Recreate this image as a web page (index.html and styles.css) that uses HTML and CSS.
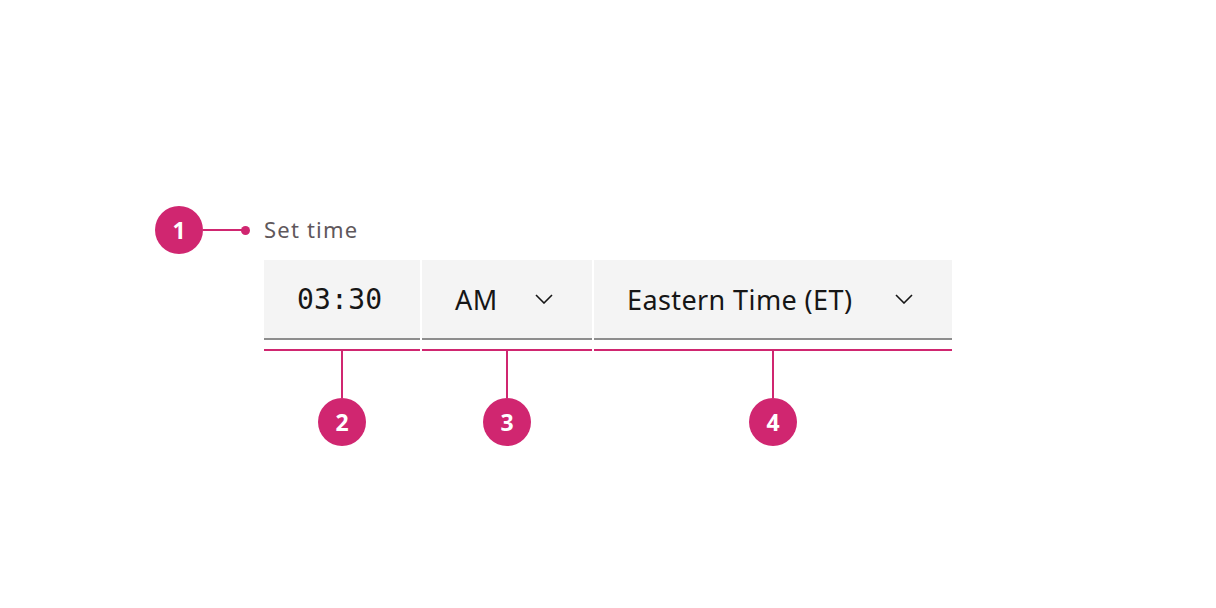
FILE: index.html
```html
<!DOCTYPE html>
<html lang="en">
<head>
<meta charset="utf-8">
<title>Time picker anatomy</title>
<link rel="stylesheet" href="styles.css">
</head>
<body>
<main class="stage">
  <div class="picker">
    <div class="label-row">
      <div class="callout-left">
        <span class="badge">1</span>
        <span class="leader"></span>
        <span class="dot"></span>
      </div>
      <span class="label">Set time</span>
    </div>
    <div class="fields">
      <div class="part part-time">
        <div class="field">
          <span class="mono">03:30</span>
        </div>
        <div class="bracket"></div>
        <div class="stem"></div>
        <span class="badge">2</span>
      </div>
      <div class="part part-ampm">
        <div class="field select">
          <span class="value">AM</span>
          <svg class="chevron" width="18" height="10" viewBox="0 0 18 10"><path d="M1 1 L9 9 L17 1" fill="none" stroke="#161616" stroke-width="1.6"/></svg>
        </div>
        <div class="bracket"></div>
        <div class="stem"></div>
        <span class="badge">3</span>
      </div>
      <div class="part part-zone">
        <div class="field select">
          <span class="value">Eastern Time (ET)</span>
          <svg class="chevron" width="18" height="10" viewBox="0 0 18 10"><path d="M1 1 L9 9 L17 1" fill="none" stroke="#161616" stroke-width="1.6"/></svg>
        </div>
        <div class="bracket"></div>
        <div class="stem"></div>
        <span class="badge">4</span>
      </div>
    </div>
  </div>
</main>
</body>
</html>
```

FILE: styles.css
```css
* { box-sizing: border-box; }
html, body { margin: 0; padding: 0; background: #ffffff; }
body { width: 1216px; height: 608px; overflow: hidden; font-family: "Noto Sans", "Open Sans", sans-serif; }

.stage { padding: 215px 0 0 264px; }

.picker { display: flex; flex-direction: column; width: 688px; }

.label-row { position: relative; height: 45px; display: flex; align-items: flex-start; }
.label {
  font-family: "Noto Sans", sans-serif;
  font-size: 22px;
  line-height: 28px;
  letter-spacing: 1.2px;
  color: #5f585c;
}

.callout-left {
  position: absolute;
  right: 100%;
  top: -9px;
  margin-right: 14px;
  display: flex;
  align-items: center;
}
.callout-left .leader { width: 42px; height: 2px; background: #d02670; }
.callout-left .dot { width: 9px; height: 9px; border-radius: 50%; background: #d02670; margin-left: -4px; }

.badge {
  width: 48px; height: 48px; border-radius: 50%;
  background: #d02670; color: #ffffff;
  display: flex; align-items: center; justify-content: center;
  font-family: "Noto Sans", sans-serif; font-weight: 700; font-size: 23px;
  flex: none;
}

.fields { display: flex; gap: 2px; }
.part { display: flex; flex-direction: column; align-items: center; }
.part-time { width: 156px; }
.part-ampm { width: 170px; }
.part-zone { width: 358px; }

.field {
  width: 100%; height: 80px;
  background: #f4f4f4;
  border-bottom: 2px solid #8d8d8d;
  display: flex; align-items: center;
  padding: 0 33px;
  color: #161616;
}
.select { justify-content: space-between; padding-right: 39px; }
.mono { font-family: "DejaVu Sans Mono", monospace; font-size: 28px; letter-spacing: 0.2px; }
.value { font-family: "Noto Sans", sans-serif; font-size: 27px; letter-spacing: 0.4px; }
.chevron { display: block; }

.bracket { width: 100%; height: 2px; background: #d02670; margin-top: 9px; }
.stem { width: 2px; height: 47px; background: #d02670; }
```
